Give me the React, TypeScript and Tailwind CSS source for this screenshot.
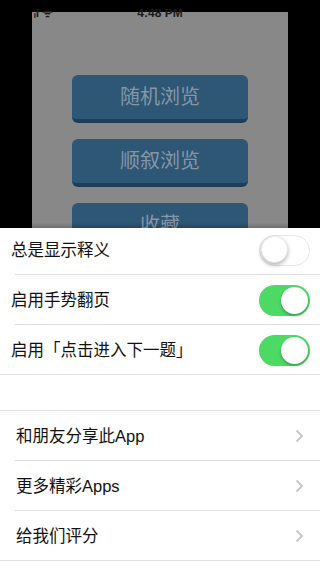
import React from "react";

const font = { fontFamily: '"Liberation Sans", "Noto Sans CJK SC", sans-serif' };

function Switch({ on }: { on: boolean }) {
    return on ? (
        <div className="relative w-[51px] h-[31px] rounded-full bg-[#4cd964]">
            <div className="absolute right-[2px] top-[2px] w-[27px] h-[27px] rounded-full bg-white shadow-[0_2px_3px_rgba(0,0,0,0.25)]" />
        </div>
    ) : (
        <div className="relative w-[51px] h-[31px] rounded-full bg-white border-[1.5px] border-[#e6e6e6]">
            <div className="absolute left-[0.5px] top-[0.5px] w-[27px] h-[27px] rounded-full bg-white shadow-[0_2px_4px_rgba(0,0,0,0.3)] border border-[#eaeaea]" />
        </div>
    );
}

function Chevron() {
    return (
        <svg width="9" height="14" viewBox="0 0 9 14" fill="none">
            <path d="M1.5 1.5 L7 7 L1.5 12.5" stroke="#c7c7cc" strokeWidth="2" />
        </svg>
    );
}

function ToggleRow({ label, on, h = "h-[50px]", divider = true }: { label: string; on: boolean; h?: string; divider?: boolean }) {
    return (
        <div className={`relative ${h} flex items-center justify-between pl-[11px] pr-[10px]`}>
            <span className="text-[16.5px] text-[#111]">{label}</span>
            <Switch on={on} />
            {divider && <div className="absolute left-[15px] right-0 bottom-0 h-px bg-[#e0e0e0]" />}
        </div>
    );
}

function LinkRow({ label, last = false }: { label: string; last?: boolean }) {
    return (
        <div className="relative h-[50px] flex items-center justify-between pl-[16px] pr-[16px]">
            <span className="text-[16.5px] text-[#111]">{label}</span>
            <Chevron />
            <div className={`absolute ${last ? "left-0" : "left-[15px]"} right-0 bottom-0 h-px bg-[#e0e0e0]`} />
        </div>
    );
}

export default function App() {
    return (
        <div className="w-[320px] h-[568px] bg-black overflow-hidden flex flex-col" style={font}>
            {/* dimmed app behind the sheet, its status bar cut at the top */}
            <div className="h-[228px] px-[32px] pt-[9px] shrink-0">
                <div className="relative h-full overflow-hidden">
                    <div className="absolute z-10 -top-[3px] left-0 right-0 flex justify-center text-[12px] leading-[14px] font-semibold text-[#1a1a1a]">
                        4:48 PM
                    </div>
                    <div className="absolute z-10 -top-[3px] left-[2px] text-[12px] leading-[14px] font-semibold text-[#1a1a1a]">ᵢl ᯤ</div>
                    <div className="mt-[3px] h-[216px] bg-[#888888] flex flex-col items-center overflow-hidden relative">
                        <div className="mt-[63px] flex flex-col gap-[16px]">
                            {["随机浏览", "顺叙浏览", "收藏"].map((t) => (
                                <div
                                    key={t}
                                    className="w-[176px] h-[48px] shrink-0 rounded-[6px] bg-[#2e5675] border-b-[4px] border-[#1f3d56] flex items-center justify-center text-[20px] text-[#8597a7]"
                                >
                                    {t}
                                </div>
                            ))}
                        </div>
                        <div className="absolute left-0 right-0 bottom-0 h-[5px] bg-gradient-to-b from-transparent to-[rgba(0,0,0,0.2)]" />
                    </div>
                </div>
            </div>

            {/* settings sheet */}
            <div className="flex-1 bg-white">
                <ToggleRow label="总是显示释义" on={false} h="h-[47px] pb-[3px]" />
                <ToggleRow label="启用手势翻页" on={true} />
                <div className="relative">
                    <ToggleRow label="启用「点击进入下一题」" on={true} divider={false} />
                    <div className="absolute left-0 right-0 bottom-0 h-px bg-[#e0e0e0]" />
                </div>
                <div className="h-[36px] border-b border-[#e0e0e0]" />
                <LinkRow label="和朋友分享此App" />
                <LinkRow label="更多精彩Apps" />
                <LinkRow label="给我们评分" last />
            </div>
        </div>
    );
}
